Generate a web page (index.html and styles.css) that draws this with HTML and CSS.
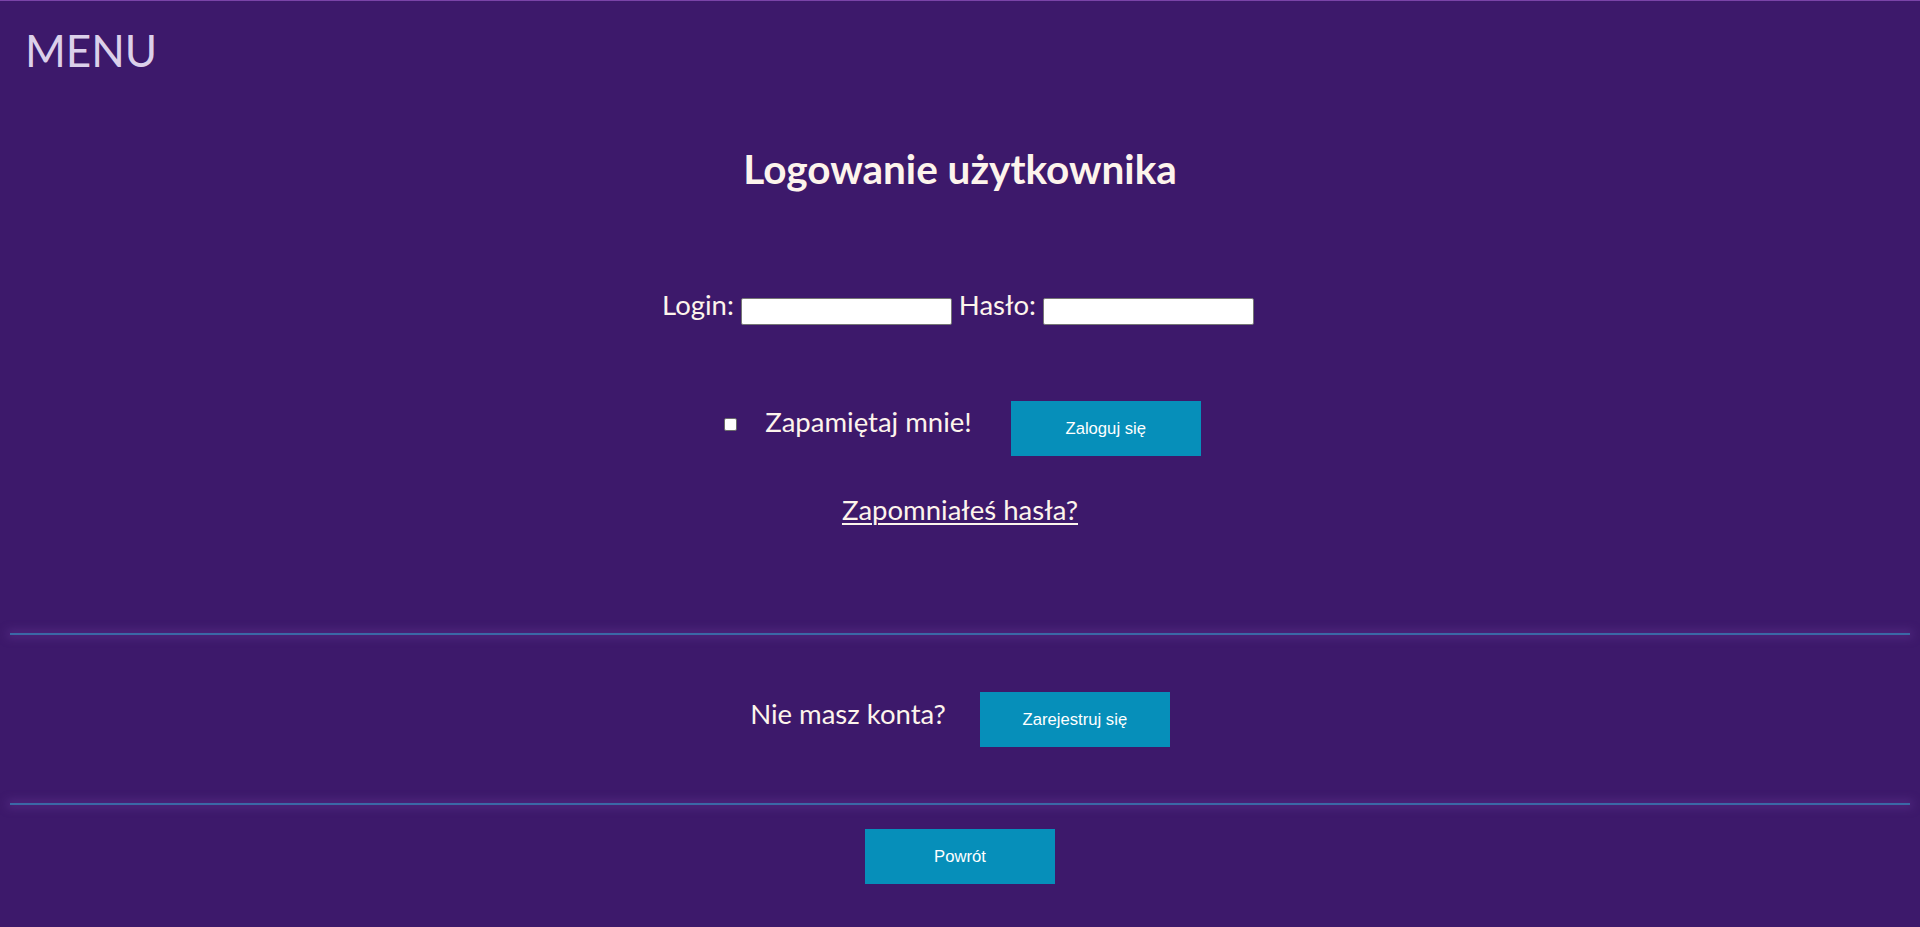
FILE: index.html
```html
<!DOCTYPE html>
<html lang="pl">
<head>
<meta charset="utf-8">
<title>Logowanie użytkownika</title>
<link rel="stylesheet" href="styles.css">
</head>
<body>
<header class="menu">MENU</header>
<main class="page">
  <h1 class="title">Logowanie użytkownika</h1>
  <form class="login" action="#">
    <div class="creds">
      <label class="label" for="login">Login:</label>
      <input class="field" id="login" type="text">
      <label class="label" for="pass">Hasło:</label>
      <input class="field" id="pass" type="password">
    </div>
    <div class="remember">
      <input class="check" type="checkbox" id="rem">
      <label class="label remember-text" for="rem">Zapamiętaj mnie!</label>
      <button class="btn" type="button">Zaloguj się</button>
    </div>
    <div class="forgot-row"><a class="forgot" href="#">Zapomniałeś hasła?</a></div>
  </form>
  <hr class="sep sep-first">
  <div class="register">
    <span class="label register-text">Nie masz konta?</span>
    <button class="btn" type="button">Zarejestruj się</button>
  </div>
  <hr class="sep sep-second">
  <div class="back">
    <button class="btn" type="button">Powrót</button>
  </div>
</main>
</body>
</html>
```

FILE: styles.css
```css
* { box-sizing: border-box; }

html, body {
  margin: 0;
  padding: 0;
  background: #3d196b;
}

body {
  border-top: 1px solid #7a44a8;
  min-height: 927px;
  font-family: Lato, "Liberation Sans", sans-serif;
  color: #fdf4ec;
}

.menu {
  padding: 23px 0 0 25px;
  font-size: 44px;
  line-height: 1.2;
  color: #dcd0ea;
  font-weight: 400;
}

.page {
  display: flex;
  flex-direction: column;
  align-items: center;
}

.title {
  margin: 68px 0 0;
  font-size: 40.5px;
  line-height: 1.2;
  font-weight: 700;
  color: #fdf4ec;
}

.login {
  display: flex;
  flex-direction: column;
  align-items: center;
  margin: 0;
}

.label {
  font-size: 27.5px;
  line-height: 1.2;
  color: #fdf4ec;
}

.creds {
  display: flex;
  align-items: flex-start;
  margin-top: 95px;
  height: 38px;
  padding-left: 3px;
}

.field {
  width: 211px;
  height: 27px;
  margin: 10px 7px 0 7px;
  padding: 1px 2px;
  border: 1px solid #767676;
  border-radius: 2px;
  background: #fff;
  font: 13px "Liberation Sans", sans-serif;
}

.remember {
  display: flex;
  align-items: flex-start;
  margin-top: 75px;
  padding-left: 5px;
}

.check {
  appearance: none;
  -webkit-appearance: none;
  width: 13px;
  height: 13px;
  margin: 17px 28px 0 0;
  border: 1px solid #6b6b6b;
  border-radius: 2px;
  background: #fff;
}

.remember-text {
  margin-top: 4px;
  margin-right: 39px;
}

.btn {
  width: 190px;
  height: 55px;
  border: 0;
  padding: 0;
  background: #068fba;
  color: #fff;
  font-family: "Liberation Sans", Arial, sans-serif;
  font-size: 16.67px;
}

.forgot-row {
  margin-top: 37px;
  font-size: 27.5px;
  line-height: 1.2;
}

.forgot {
  color: #fdf4ec;
  text-decoration: underline;
  text-underline-offset: 3px;
  text-decoration-thickness: 2px;
}

.sep {
  align-self: stretch;
  margin: 107px 10px 0;
  height: 2px;
  border: 0;
  background: #3b68a6;
  box-shadow: 0 0 10px 3px rgba(105, 60, 150, 0.45);
}

.register {
  display: flex;
  align-items: flex-start;
  margin-top: 57px;
}

.register-text {
  margin-top: 5px;
  margin-right: 34px;
}

.sep-second {
  margin-top: 56px;
}

.back {
  margin-top: 24px;
}
```
